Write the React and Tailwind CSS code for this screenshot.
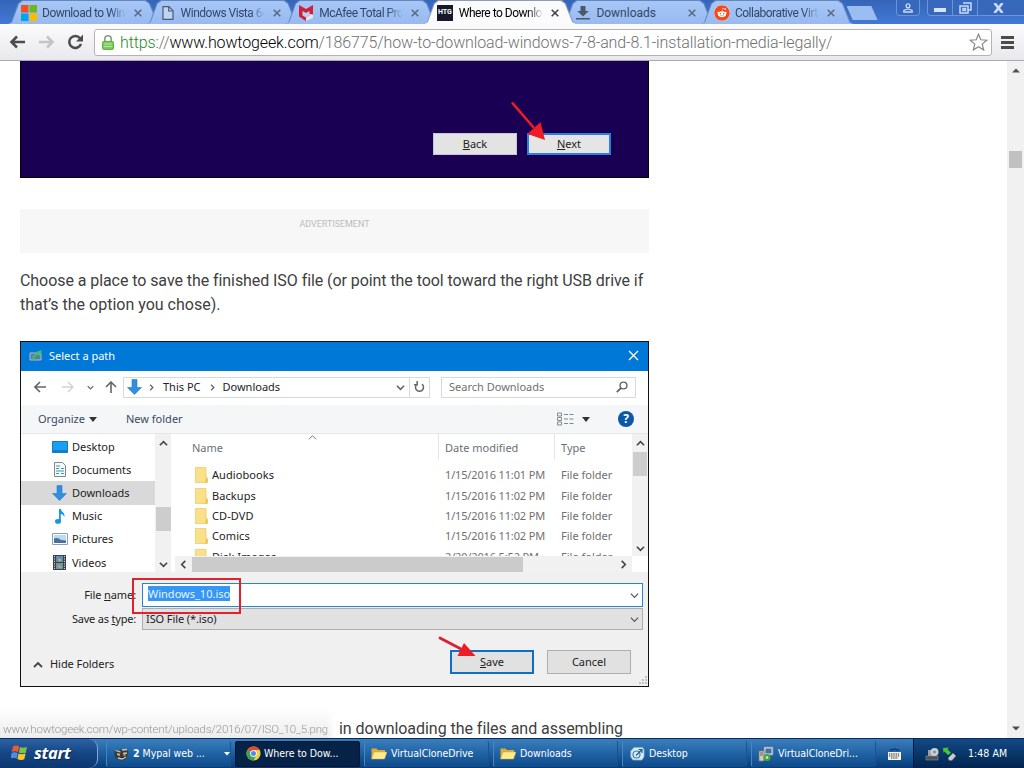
import React from "react";
import { FaReddit } from "react-icons/fa";

const TABS = [
  { title: "Download to Win", icon: "ms" },
  { title: "Windows Vista 64", icon: "page" },
  { title: "McAfee Total Pro", icon: "mcafee" },
  { title: "Where to Downlo", icon: "htg", active: true },
  { title: "Downloads", icon: "down", short: true },
  { title: "Collaborative Virtu", icon: "reddit" },
];

const FOLDERS = [
  { name: "Desktop", icon: "desktop" },
  { name: "Documents", icon: "doc" },
  { name: "Downloads", icon: "down", selected: true },
  { name: "Music", icon: "music" },
  { name: "Pictures", icon: "pic" },
  { name: "Videos", icon: "video" },
];

const FILES = [
  { name: "Audiobooks", date: "1/15/2016 11:01 PM" },
  { name: "Backups", date: "1/15/2016 11:02 PM" },
  { name: "CD-DVD", date: "1/15/2016 11:02 PM" },
  { name: "Comics", date: "1/15/2016 11:02 PM" },
  { name: "Disk Images", date: "2/20/2016 5:52 PM" },
];

/* ───────── shared bits ───────── */
const Chevron = ({ dir = "down", size = 9, className = "", weight = 1.8 }) => {
  const d = {
    down: "M1 3l4 4 4-4",
    up: "M1 7l4-4 4 4",
    left: "M7 1L3 5l4 4",
    right: "M3 1l4 4-4 4",
  }[dir];
  return (
    <svg width={size} height={size} viewBox="0 0 10 10" className={className}>
      <path d={d} fill="none" stroke="currentColor" strokeWidth={weight} />
    </svg>
  );
};

const CloseX = ({ size = 8, className = "" }) => (
  <svg width={size} height={size} viewBox="0 0 8 8" className={className}>
    <path d="M.7.7l6.6 6.6M7.3.7L.7 7.3" stroke="currentColor" strokeWidth="1.6" />
  </svg>
);

const BlueArrow = () => (
  <svg width="15" height="16" viewBox="0 0 15 16">
    <path d="M5 .5h5v8h4.5L7.5 15.5.5 8.5H5z" fill="#2f8fe0" stroke="#2a7cc4" strokeWidth=".6" />
  </svg>
);

/* ───────── browser tabs ───────── */
const Favicon = ({ kind }) => {
  switch (kind) {
    case "ms":
      return (
        <svg width="16" height="16" viewBox="0 0 16 16">
          <path d="M0 0h7.5v7.5H0z" fill="#f25022" />
          <path d="M8.5 0H16v7.5H8.5z" fill="#6fb71c" />
          <path d="M0 8.5h7.5V16H0z" fill="#00a4ef" />
          <path d="M8.5 8.5H16V16H8.5z" fill="#ffb900" />
        </svg>
      );
    case "page":
      return (
        <svg width="16" height="16" viewBox="0 0 16 16">
          <path d="M3 1.7h6l4 4v8.6H3z" fill="#bdd3f7" stroke="#4d5a70" strokeWidth="1.2" />
          <path d="M8.7 1.7V6H13" fill="none" stroke="#4d5a70" strokeWidth="1.2" />
        </svg>
      );
    case "mcafee":
      return (
        <svg width="16" height="16" viewBox="0 0 16 16">
          <path d="M1 0l7 4 7-4v11.500L8 16l-7-4.5z" fill="#cf2238" />
          <path d="M4.500 6L8 8l3.500-2v4.500L8 12.500l-3.500-2z" fill="#bcd0f3" />
          <path d="M11.500 9l3.500.5V13l-7 3v-3.500l3.500-2z" fill="#e3e8f6" />
        </svg>
      );
    case "htg":
      return (
        <span className="flex h-4 w-4 items-center justify-center overflow-hidden bg-[#17192b] font-['Roboto',sans-serif] text-[7px] leading-none font-bold tracking-[-0.1px] text-white">
          HTG
        </span>
      );
    case "down":
      return (
        <svg width="16" height="16" viewBox="0 0 16 16">
          <path d="M5.5 1h5v5h3.3L8 11.5 2.2 6h3.3zM1 13h14v1.6H1z" fill="#4c5869" />
        </svg>
      );
    default:
      return (
        <span className="flex h-4 w-4 items-center justify-center rounded-full bg-white">
          <FaReddit size={16} color="#f2491d" />
        </span>
      );
  }
};

const Tab = ({ title, icon, active, short }) => (
  <div
    className={
      "relative -mr-[14px] h-[24px] w-[152.6px] shrink-0 [clip-path:polygon(0_100%,3px_94%,10px_14%,14px_0,138px_0,142px_14%,149.6px_94%,100%_100%)] " +
      (active ? "z-10 bg-[#8e9cb8]" : "bg-[#6288c4]")
    }
  >
    <div
      className={
        "mt-px flex h-[23px] items-center pr-4 pl-[13px] [clip-path:polygon(0_100%,4px_94%,11px_12%,15px_0,137px_0,141px_12%,148.6px_94%,100%_100%)] " +
        (active
          ? "bg-[#fbfbfd] text-black"
          : "bg-linear-to-b from-[#a6c6f6] to-[#98baf0] text-[#34476a]")
      }
    >
      <Favicon kind={icon} />
      <span
        className={
          "w-[84px] font-['Roboto',sans-serif] text-[12px] leading-4 whitespace-nowrap " +
          (active ? "ml-[6px] mr-[-2px] " : "ml-[5px] mr-[-1px] ") +
          (short ? "" : "tracking-[-0.5px] [mask-image:linear-gradient(to_right,black_82%,transparent_100%)]")
        }
      >
        {title}
      </span>
      <CloseX className={active ? "ml-[10px] text-[#444]" : "ml-[9px] text-[#5a6a88]"} />
    </div>
  </div>
);

const TabStrip = () => (
  <div className="flex h-6 bg-linear-to-b from-[#3565b8] to-[#4279d6] pl-2">
    {TABS.map((t) => (
      <Tab key={t.title} {...t} />
    ))}
    <div className="mt-[6px] ml-[7px] h-[14px] w-[31px] bg-[#9bbdf1] [clip-path:polygon(0_0,80%_0,100%_100%,20%_100%)]" />
    <div className="ml-auto flex h-4 text-[#c9dcfb]">
      <div className="mr-[7px] flex w-6 items-center justify-center rounded-b-[4px] border border-t-0 border-[#6a94de] bg-[#3768bc]">
        <svg width="10" height="10" viewBox="0 0 10 10">
          <circle cx="5" cy="2.8" r="1.9" fill="none" stroke="currentColor" strokeWidth="1.3" />
          <path d="M.8 9V7.6Q5 4.6 9.2 7.6V9z" fill="none" stroke="currentColor" strokeWidth="1.3" />
        </svg>
      </div>
      <div className="flex rounded-bl-[4px] border-b border-l border-[#6a94de] bg-[#3768bc]">
        <div className="flex w-[25px] items-center justify-center border-r border-[#6a94de] pt-1">
          <span className="h-1 w-3 bg-[#d5e4fc]" />
        </div>
        <div className="flex w-[25px] items-center justify-center border-r border-[#6a94de]">
          <svg width="13" height="12" viewBox="0 0 13 12">
            <path d="M4 1h8v7H9.5M1 4h8v7H1zM4 6.5h2.5v2H4z" fill="none" stroke="currentColor" strokeWidth="1.5" />
          </svg>
        </div>
        <div className="flex w-[46px] items-center pl-[15px]">
          <svg width="11" height="10" viewBox="0 0 11 10">
            <path d="M1.5 0L9.5 10M9.5 0L1.5 10" stroke="currentColor" strokeWidth="2.6" />
          </svg>
        </div>
      </div>
    </div>
  </div>
);

/* ───────── address bar ───────── */
const Toolbar = () => (
  <div className="flex h-[37px] items-center border-b border-[#a9a9b2] bg-linear-to-b from-[#fbfbfd] to-[#e9e9ed] pl-[9px]">
    <svg width="17" height="14" viewBox="0 0 17 14">
      <path d="M16 7H3M8 1.5L2.5 7 8 12.5" fill="none" stroke="#4c4c4c" strokeWidth="2.6" />
    </svg>
    <svg width="17" height="14" viewBox="0 0 17 14" className="ml-3">
      <path d="M1 7h13M9 1.5L14.5 7 9 12.5" fill="none" stroke="#c4c4c6" strokeWidth="2.6" />
    </svg>
    <svg width="17" height="16" viewBox="0 0 17 16" className="ml-3">
      <path d="M13 4.2A6 6 0 1 0 14 9.8" fill="none" stroke="#4c4c4c" strokeWidth="2.5" />
      <path d="M16 .5v7H9z" fill="#4c4c4c" />
    </svg>
    <div className="ml-[10px] flex h-[27px] w-[898px] items-center rounded-[3px] border border-[#b9b2b2] bg-white pl-[7px]">
      <svg width="12" height="15" viewBox="0 0 12 15">
        <path d="M2.8 7V4a3.2 3.2 0 0 1 6.4 0v3" fill="none" stroke="#8c9a88" strokeWidth="1.6" />
        <rect x=".6" y="6.4" width="10.8" height="8" rx="1" fill="#7ccb5c" stroke="#5da844" />
        <path d="M2 9h8M2 11.5h8" stroke="#b4e69d" />
      </svg>
      <span className="mt-px ml-[6px] font-['Roboto',sans-serif] text-[16px] leading-5 font-light tracking-[-0.13px] whitespace-nowrap text-[#707070]">
        <span className="text-[#1f8a2b]">https</span>://<span className="text-black">www.howtogeek.com</span>
        /186775/how-to-download-windows-7-8-and-8.1-installation-media-legally/
      </span>
      <svg width="19" height="18" viewBox="0 0 19 18" className="mr-[3px] ml-auto">
        <path d="M9.5 1.2l2.3 5.6 6 .4-4.6 3.9 1.5 5.9-5.2-3.2L4.3 17l1.5-5.9L1.2 7.2l6-.4z" fill="#fff" stroke="#888" strokeWidth="1.2" />
      </svg>
    </div>
    <div className="ml-[9px] flex flex-col gap-[2px]">
      <span className="h-[3px] w-[13px] bg-[#4b4b4b]" />
      <span className="h-[3px] w-[13px] bg-[#4b4b4b]" />
      <span className="h-[3px] w-[13px] bg-[#4b4b4b]" />
    </div>
  </div>
);

/* ───────── article: first figure ───────── */
const SetupFigure = () => (
  <div className="relative flex h-[117px] items-start justify-end border border-t-0 border-black bg-[#1a0052] pt-[72px] pr-[37px] font-['Noto_Sans',sans-serif] text-[11px] text-[#222]">
    <div className="flex h-[22px] w-[84px] items-center justify-center border border-[#c9c4d8] bg-[#e3e3e3]">
      <span><u>B</u>ack</span>
    </div>
    <div className="ml-[10px] flex h-[22px] w-[84px] items-center justify-center border-2 border-[#2f7fe0] bg-[#e5e5e5]">
      <span><u>N</u>ext</span>
    </div>
    <svg width="36" height="40" viewBox="0 0 36 40" className="absolute top-[40px] left-[489px]">
      <path d="M2 1.5L24 27" stroke="#ee1c25" strokeWidth="2.6" />
      <path d="M35 39L17.5 33 30.5 21z" fill="#ee1c25" />
    </svg>
  </div>
);

/* ───────── article: save dialog ───────── */
const FolderIcon = ({ kind }) => {
  switch (kind) {
    case "desktop":
      return (
        <svg width="16" height="12" viewBox="0 0 16 12">
          <path d="M.5.5h15v11H.5z" fill="#18a0f2" stroke="#1377c4" />
          <path d="M1 10h14" stroke="#0c5fa8" />
        </svg>
      );
    case "doc":
      return (
        <svg width="12" height="15" viewBox="0 0 12 15">
          <path d="M.5.5h8l3 3v11H.5z" fill="#f4f8f8" stroke="#7c8a8c" />
          <path d="M2 4h4M2 6.5h3M7 6.5h3M2 9h8M2 11.5h3M7 11.5h3" stroke="#3f9aa8" strokeWidth="1.2" />
        </svg>
      );
    case "down":
      return <BlueArrow />;
    case "music":
      return (
        <svg width="12" height="15" viewBox="0 0 12 15">
          <path d="M5 0h1.8c.5 3 4.7 3.5 3.5 8-.6-2-2-2.7-3.5-3v7.2H5z" fill="#1897e0" />
          <ellipse cx="4" cy="12.4" rx="3" ry="2.3" fill="#1897e0" />
        </svg>
      );
    case "pic":
      return (
        <svg width="16" height="12" viewBox="0 0 16 12">
          <path d="M.5.5h15v11H.5z" fill="#fff" stroke="#8ca0b4" />
          <path d="M2 2h12v8H2z" fill="#b9dcf6" />
          <path d="M2 5.5q4-1.5 7 1.5l5 .5V10H2z" fill="#4a6f9c" />
        </svg>
      );
    default:
      return (
        <svg width="13" height="15" viewBox="0 0 13 15">
          <path d="M0 0h13v15H0z" fill="#3c4248" />
          <path d="M3 1h7v6H3z" fill="#5d8ac0" />
          <path d="M3 8h7v6H3z" fill="#6d96a8" />
          <path d="M5 3l4 2-3 2zM5 10l4 2-3 1z" fill="#d2b640" />
          <path d="M1.5 1v13M11.5 1v13" stroke="#c9ced2" strokeDasharray="1.2 1.2" />
        </svg>
      );
  }
};

const YellowFolder = () => (
  <svg width="13" height="16" viewBox="0 0 13 16">
    <path d="M.5.5h10.5V10l1.500 1v4.500H.5z" fill="#fbe08a" stroke="#eccb68" strokeWidth=".8" />
    <path d="M11 10l1.5 1v4.5h-2.5z" fill="#e9c75c" />
  </svg>
);

const SidePane = () => (
  <div className="flex h-[138px] w-[150px] shrink-0 overflow-hidden">
    <div className="w-[134px] pt-px">
      {FOLDERS.map((f) => (
        <div
          key={f.name}
          className={"flex h-[23.2px] items-center pl-[30px] " + (f.selected ? "bg-[#d9d9d9]" : "")}
        >
          <span className="flex w-[17px] justify-center">
            <FolderIcon kind={f.icon} />
          </span>
          <span className="ml-1">{f.name}</span>
        </div>
      ))}
    </div>
    <div className="flex w-4 flex-col items-center bg-[#f1f1f1] text-[#444]">
      <Chevron dir="up" className="mt-[5px]" />
      <span className="mt-[59px] h-6 w-[15px] bg-[#cdcdcd]" />
      <Chevron dir="down" className="mt-auto mb-[3px]" />
    </div>
  </div>
);

const FileList = () => (
  <div className="flex h-[138px] flex-1 flex-col pl-1">
    <div className="flex h-[122px]">
      <div className="relative flex-1 overflow-hidden">
        <div className="flex h-[31px] text-[#6a7078]">
          <span className="w-[263px] pt-[6px] pl-[17px]">Name</span>
          <span className="h-[26px] w-[116px] border-l border-[#e4e4e4] pt-[6px] pl-[6px]">Date modified</span>
          <span className="h-[26px] border-l border-[#e4e4e4] pt-[6px] pl-[6px]">Type</span>
        </div>
        <Chevron dir="up" weight={1.1} className="absolute -top-px left-[133px] text-[#777]" />
        {FILES.map((f) => (
          <div key={f.name} className="flex h-[20.4px] items-center text-[#707070]">
            <span className="flex w-[270px] items-center pl-5 text-[#222]">
              <YellowFolder />
              <span className="ml-1 tracking-[0.08px]">{f.name}</span>
            </span>
            <span className="w-[116px] tracking-[-0.15px] whitespace-nowrap">{f.date}</span>
            <span className="whitespace-nowrap">File folder</span>
          </div>
        ))}
      </div>
      <div className="flex w-4 flex-col items-center bg-[#f1f1f1] text-[#444]">
        <Chevron dir="up" className="mt-[5px]" />
        <span className="mt-1 h-6 w-[14px] bg-[#cdcdcd]" />
        <Chevron dir="down" className="mt-auto mb-[3px]" />
      </div>
    </div>
    <div className="flex h-4 text-[#444]">
      <div className="flex h-4 flex-1 items-center bg-[#f1f1f1]">
        <Chevron dir="left" className="ml-1" />
        <span className="ml-1 h-[15px] w-[331px] bg-[#cbcbcb]" />
        <Chevron dir="right" className="mr-1 ml-auto" />
      </div>
      <div className="w-4" />
    </div>
  </div>
);

const SaveDialog = () => (
  <div className="relative h-[346px] border border-[#111] bg-white font-['Noto_Sans','Open_Sans',sans-serif] text-[11px] leading-[16px] text-[#222]">
    <div className="flex h-[29px] items-center bg-[#0078d7] pr-[9px] pb-[2px] pl-2 text-white">
      <svg width="14" height="14" viewBox="0 0 14 14">
        <path d="M1 4h11v7H1z" fill="#5b7f9b" stroke="#a6bccb" />
        <path d="M3 10.5C4 6 6 5 8 5V2.5l5-1.5-2 6-1.5-1.2C7 6 5 8 4.5 11z" fill="#35c56a" />
      </svg>
      <span className="ml-[6px]">Select a path</span>
      <svg width="11" height="11" viewBox="0 0 11 11" className="ml-auto">
        <path d="M1 1l9 9M10 1L1 10" stroke="#fff" strokeWidth="1.3" />
      </svg>
    </div>

    {/* navigation row */}
    <div className="flex h-[34px] items-center pb-[2px] pl-[13px] text-[#666]">
      <svg width="12" height="12" viewBox="0 0 12 12">
        <path d="M12 6H1.5M6 1L1 6l5 5" fill="none" stroke="currentColor" strokeWidth="1.6" />
      </svg>
      <svg width="12" height="12" viewBox="0 0 12 12" className="ml-4 text-[#d2d2d2]">
        <path d="M0 6h10.5M6 1l5 5-5 5" fill="none" stroke="currentColor" strokeWidth="1.4" />
      </svg>
      <Chevron size={7} className="ml-[13px]" />
      <svg width="12" height="12" viewBox="0 0 12 12" className="ml-[11px]">
        <path d="M6 12V1.5M1 6l5-5 5 5" fill="none" stroke="currentColor" strokeWidth="1.6" />
      </svg>
      <div className="ml-[6px] flex h-[21px] w-[307px] items-center border border-[#d9d9d9] pl-[3px] text-[#222]">
        <BlueArrow />
        <Chevron dir="right" size={7} className="ml-[6px] text-[#666]" />
        <span className="ml-2">This PC</span>
        <Chevron dir="right" size={7} className="ml-2 text-[#666]" />
        <span className="ml-[7px]">Downloads</span>
        <Chevron className="mr-1 ml-auto text-[#666]" />
        <span className="flex h-full w-5 items-center justify-center border-l border-[#d9d9d9]">
          <svg width="11" height="12" viewBox="0 0 11 12">
            <path d="M8 3.2A4 4 0 1 1 3 3.2M3.2 0v3.8H0" fill="none" stroke="#666" strokeWidth="1.5" />
          </svg>
        </span>
      </div>
      <div className="ml-[11px] flex h-[21px] w-[195px] items-center border border-[#d9d9d9] pr-[7px] pl-[7px] text-[#707070]">
        Search Downloads
        <svg width="12" height="12" viewBox="0 0 12 12" className="ml-auto">
          <circle cx="7.5" cy="4.5" r="3.4" fill="none" stroke="#666" strokeWidth="1.4" />
          <path d="M5 7L.8 11.2" stroke="#666" strokeWidth="1.8" />
        </svg>
      </div>
    </div>

    {/* command row */}
    <div className="flex h-[29px] items-center border-b border-[#e6e7e9] bg-[#f5f6f8] pl-[17px] text-[#3b4a63]">
      <span>Organize</span>
      <svg width="8" height="5" viewBox="0 0 8 5" className="ml-[4px]">
        <path d="M0 0h8L4 5z" fill="#333" />
      </svg>
      <span className="ml-[29px]">New folder</span>
      <svg width="17" height="14" viewBox="0 0 17 14" className="ml-auto">
        <path d="M.5 1h4v3h-4zM.5 5.5h4v3h-4zM.5 10h4v3h-4z" fill="none" stroke="#8a8a8a" />
        <path d="M7 2.5h4M12.5 2.5h4M7 7h4M12.5 7h4M7 11.5h4M12.5 11.5h4" stroke="#7d8894" strokeWidth="1.2" />
      </svg>
      <svg width="8" height="5" viewBox="0 0 8 5" className="ml-2">
        <path d="M0 0h8L4 5z" fill="#333" />
      </svg>
      <span className="mr-[14px] ml-[28px] flex h-4 w-4 items-center justify-center rounded-full bg-[#0b57a8] text-[12px] font-bold text-white">
        ?
      </span>
    </div>

    <div className="flex h-[138px]">
      <SidePane />
      <FileList />
    </div>

    {/* file name and type */}
    <div className="h-[114px] bg-[#f0f0f0] pt-[11px]">
      <div className="flex h-6 items-center">
        <span className="w-[115px] text-right tracking-[-0.1px]">File <u>n</u>ame:</span>
        <div className="ml-[6px] flex h-6 w-[501px] items-center border border-[#2686d4] bg-white pr-[3px] pl-[5px]">
          <span className="mb-[3px] bg-[#3596f5] leading-[15px] text-[#e8f3ff]">Windows_10.iso</span>
          <Chevron weight={1.3} className="ml-auto text-[#555]" />
        </div>
      </div>
      <div className="mt-px flex h-[22px] items-center">
        <span className="w-[115px] text-right tracking-[-0.2px]">Save as <u>t</u>ype:</span>
        <div className="ml-[6px] flex h-[22px] w-[501px] items-center border border-[#adadad] bg-[#e1e1e1] pr-[3px] pl-[3px] tracking-[-0.1px]">
          ISO File (*.iso)
          <Chevron weight={1.3} className="ml-auto text-[#555]" />
        </div>
      </div>
      <div className="mt-5 flex items-center pr-[17px] pl-3">
        <Chevron dir="up" size={10} className="mt-[5px] text-[#444]" />
        <span className="mt-[4px] ml-[7px] tracking-[-0.05px]">Hide Folders</span>
        <div className="ml-auto flex h-6 w-[84px] items-center justify-center border-2 border-[#0f6fc6] bg-[#e1e1e1] pb-px">
          <span><u>S</u>ave</span>
        </div>
        <div className="ml-[13px] flex h-6 w-[84px] items-center justify-center border border-[#adadad] bg-[#e1e1e1] pb-px">
          Cancel
        </div>
      </div>
    </div>

    {/* annotations over the dialog */}
    <div className="absolute top-[236px] left-[111px] h-[36px] w-[109px] border-2 border-[#e3202b]" />
    <svg width="38" height="22" viewBox="0 0 38 22" className="absolute top-[294px] left-[417px]">
      <path d="M1 1.5L24 13.5" stroke="#e31b2c" strokeWidth="2.6" />
      <path d="M37.5 20H19.5l6.5-13z" fill="#ee1c25" />
    </svg>
    <svg width="10" height="9" viewBox="0 0 10 9" className="absolute right-0 bottom-px">
      <path d="M7 0h2v2H7zM4 3h2v2H4zM7 3h2v2H7zM1 6h2v2H1zM4 6h2v2H4zM7 6h2v2H7z" fill="#c2c2c2" />
    </svg>
  </div>
);

const PageScrollbar = () => (
  <div className="flex w-[17px] flex-col items-center bg-[#f1f1f1]">
    <svg width="8" height="5" viewBox="0 0 8 5" className="mt-[7px]">
      <path d="M0 4.5h8L4 .5z" fill="#505050" />
    </svg>
    <span className="mt-[78px] h-[17px] w-[13px] bg-[#c1c1c1]" />
    <svg width="8" height="5" viewBox="0 0 8 5" className="mt-auto mb-[7px]">
      <path d="M0 .5h8L4 4.5z" fill="#505050" />
    </svg>
  </div>
);

/* ───────── taskbar ───────── */
const TaskIcon = ({ kind }) => {
  switch (kind) {
    case "mypal":
      return (
        <svg width="15" height="14" viewBox="0 0 15 14">
          <path d="M1 3l4 1 3-2 5 0 1 4-2 6-5 1.5L2 11 0 7z" fill="#3c3a38" />
          <path d="M1.5 3.5l5 1.5M8 3l5-.5M3 7l3 .5M9 6.5l4-.5M4 11l4 1 4-2" stroke="#cfc8ba" strokeWidth="1.3" />
          <circle cx="5" cy="8" r="1.1" fill="#c9a35c" />
          <circle cx="10.5" cy="8" r="1.1" fill="#c9a35c" />
        </svg>
      );
    case "chrome":
      return (
        <svg width="15" height="15" viewBox="0 0 16 16">
          <circle cx="8" cy="8" r="7.5" fill="#f0cf3c" />
          <path d="M8 8L1.5 4.25A7.5 7.5 0 0 1 14.5 4.25H8z" fill="#df4a3a" />
          <path d="M8 8L1.5 4.25A7.5 7.5 0 0 0 8 15.5L11 9.5z" fill="#3f9f54" />
          <circle cx="8" cy="8" r="3.6" fill="#fff" />
          <circle cx="8" cy="8" r="2.7" fill="#4c8bea" />
        </svg>
      );
    case "folder":
      return (
        <svg width="16" height="13" viewBox="0 0 16 13">
          <path d="M.5 11V1.5h5L7 3h7v8z" fill="#e0ac35" />
          <path d="M.5 12L3 5h13l-2.5 7z" fill="#fdeb8e" stroke="#d9a938" strokeWidth=".5" />
        </svg>
      );
    case "desktop":
      return (
        <svg width="15" height="14" viewBox="0 0 15 14">
          <path d="M4 .5h8.5l1.5 2v7l-2 3.5H3L.8 10V4z" fill="#d9edf7" stroke="#84b4cf" strokeWidth=".8" />
          <circle cx="6.5" cy="7.5" r="3.5" fill="none" stroke="#3d7ba3" strokeWidth="1.2" />
          <path d="M6 8.5L12 2.5M8.5 2.5H12V6" fill="none" stroke="#235f91" strokeWidth="1.2" />
        </svg>
      );
    default:
      return (
        <svg width="16" height="16" viewBox="0 0 16 16">
          <path d="M6 1h9v8H6z" fill="#dadada" stroke="#888" strokeWidth=".7" />
          <path d="M7.5 2.5h6v5h-6z" fill="#3a72b4" />
          <path d="M1 5h5v10H1z" fill="#cfcabd" stroke="#77736a" strokeWidth=".7" />
          <path d="M2 7h3M2 9h3" stroke="#666" />
          <circle cx="9" cy="11.5" r="3.5" fill="#45a83f" />
          <circle cx="9" cy="11.5" r="1.2" fill="#dff2dc" />
        </svg>
      );
  }
};

const TaskButton = ({ icon, children, active, arrow }) => (
  <div
    className={
      "mr-[4px] flex h-[26px] w-[125px] shrink-0 items-center rounded-[2px] text-white " +
      (active
        ? "border border-[#04152f] bg-[#062347] pl-[9px]"
        : "border-r border-l border-[#1a5490] border-l-[#4686c2] bg-linear-to-b from-[#387bba] via-[#1f62a4] to-[#0e4a8a] pl-[6px]")
    }
  >
    <span className="flex w-4 justify-center">
      <TaskIcon kind={icon} />
    </span>
    <span className={"tracking-[-0.03px] whitespace-nowrap " + (active ? "ml-[3px]" : "ml-[4px]")}>
      {children}
    </span>
    {arrow && (
      <svg width="6" height="4" viewBox="0 0 6 4" className="ml-auto">
        <path d="M0 0h6L3 3.5z" fill="#fff" />
      </svg>
    )}
  </div>
);

const Taskbar = () => (
  <div className="flex h-[30px] items-center border-t border-[#0b2b55] bg-linear-to-b from-[#3c7ebc] via-[#1c5e9f] to-[#073b77] font-['DejaVu_Sans_Condensed','DejaVu_Sans',sans-serif] text-[10.5px] text-white">
    <div className="mr-2 flex h-[29px] w-[98px] items-center rounded-r-[9px] border-r border-[#7fa9d4] bg-linear-to-b from-[#2c62a5] via-[#154583] to-[#0c3871] pb-[2px] pl-[11px]">
      <svg width="17" height="17" viewBox="0 0 17 17">
        <path d="M2 2.5q3-1.8 6.2 0L7 8Q4 6.5.8 8z" fill="#ee5a2b" />
        <path d="M9 3q3 1.5 7 0L14.8 8.7q-3.5 1.3-7-.3z" fill="#7ec242" />
        <path d="M.6 9q3-1.5 6.2 0L5.6 14.5q-3-1.5-6 0z" fill="#4c8fe0" />
        <path d="M7.6 9.4q3 1.5 7 .2l-1.3 5.7q-3.5 1.3-7-.3z" fill="#fbc62c" />
      </svg>
      <span className="ml-[6px] font-['Open_Sans',sans-serif] text-[16.5px] leading-5 font-bold italic tracking-[-0.3px] [text-shadow:1px_1px_1px_#0a2a55]">
        start
      </span>
    </div>
    <TaskButton icon="mypal" arrow><b>2</b> Mypal web ...</TaskButton>
    <TaskButton icon="chrome" active>Where to Dow...</TaskButton>
    <TaskButton icon="folder">VirtualCloneDrive</TaskButton>
    <TaskButton icon="folder">Downloads</TaskButton>
    <TaskButton icon="desktop">Desktop</TaskButton>
    <TaskButton icon="setup">VirtualCloneDri...</TaskButton>
    <svg width="13" height="12" viewBox="0 0 13 12" className="ml-[8px]">
      <path d="M2 1.5q1.5 1.5 3 0t3 0 3 0" fill="none" stroke="#0a1d38" />
      <path d="M0 4h13v8H0z" fill="#f4f4ea" />
      <path d="M1 6h11M1 8h11M3 10h7" stroke="#222" strokeDasharray="1.3 .9" />
    </svg>
    <div className="ml-auto flex h-full w-[111px] items-center border-l border-[#03183a] bg-linear-to-b from-[#134a86] to-[#02244f] pl-[11px]">
      <svg width="15" height="14" viewBox="0 0 15 14">
        <path d="M1 9h12v4H1z" fill="#4e5257" stroke="#8b8f94" strokeWidth=".6" />
        <path d="M3 3h6v6H3z" fill="#9b9fa3" />
        <circle cx="9.5" cy="5" r="4" fill="#c6ced4" />
        <circle cx="9.5" cy="5" r="1.3" fill="#7a858e" />
      </svg>
      <svg width="13" height="14" viewBox="0 0 13 14" className="ml-[3px]">
        <path d="M5 11l5-5 3 3-4 4.5H6z" fill="#c5cbd0" stroke="#5d676f" strokeWidth=".6" />
        <path d="M0 1l6-.5-1.5 1.5L8 6 5 8 1.5 4.5.5 6z" fill="#45c537" />
      </svg>
      <span className="ml-[12px] tracking-[0.05px] whitespace-nowrap">1:48 AM</span>
    </div>
  </div>
);

const App = () => (
  <div className="flex h-[768px] w-[1024px] flex-col overflow-hidden bg-white">
    <TabStrip />
    <Toolbar />
    <main className="relative flex h-[677px] overflow-hidden">
      <article className="flex-1 pl-5 font-['Roboto',sans-serif] text-[16px] leading-6 text-[#404040]">
        <div className="w-[629px]">
          <SetupFigure />
          <div className="mt-[31px] h-[44px] bg-[#f7f7f7] pt-[9px] text-center text-[9px] leading-[12px] tracking-[-0.05px] text-[#bcbcbc]">
            ADVERTISEMENT
          </div>
          <p className="mt-4 whitespace-nowrap">
            <span className="tracking-[-0.07px]">
              Choose a place to save the finished ISO file (or point the tool toward the right USB drive if
            </span>
            <br />
            that’s the option you chose).
          </p>
          <div className="mt-6">
            <SaveDialog />
          </div>
          <p className="mt-[30px] pl-[319px] tracking-[-0.04px] whitespace-nowrap">in downloading the files and assembling</p>
        </div>
      </article>
      <PageScrollbar />
      {/* link target bubble */}
      <div className="absolute bottom-0 left-0 h-[30px] w-[336px] bg-linear-to-b from-white to-[#ececec] pt-[13px] pl-[3px] font-['Roboto',sans-serif] text-[11.5px] leading-4 font-light tracking-[-0.18px] whitespace-nowrap text-[#989898] [mask-image:linear-gradient(to_right,black_97%,transparent)]">
        www.howtogeek.com/wp-content/uploads/2016/07/ISO_10_5.png
      </div>
    </main>
    <Taskbar />
  </div>
);

export default App;
